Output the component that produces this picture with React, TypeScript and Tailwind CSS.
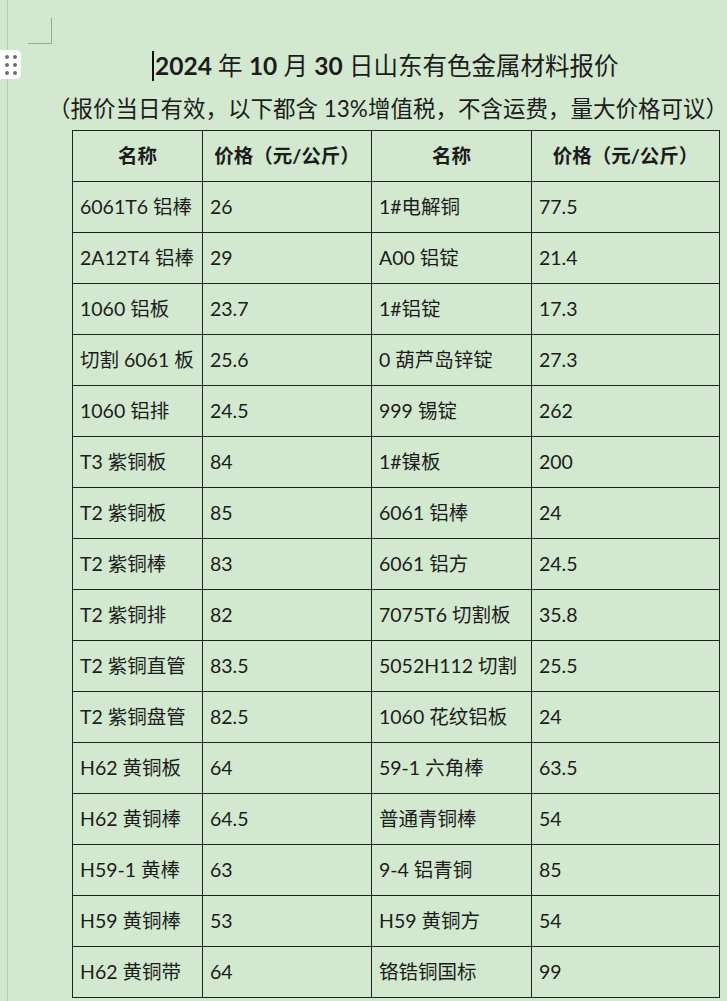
import React from 'react';

type PriceRow = {
  leftName: string;
  leftPrice: string;
  rightName: string;
  rightPrice: string;
};

const rows: PriceRow[] = [
  { leftName: '6061T6 铝棒', leftPrice: '26', rightName: '1#电解铜', rightPrice: '77.5' },
  { leftName: '2A12T4 铝棒', leftPrice: '29', rightName: 'A00 铝锭', rightPrice: '21.4' },
  { leftName: '1060 铝板', leftPrice: '23.7', rightName: '1#铝锭', rightPrice: '17.3' },
  { leftName: '切割 6061 板', leftPrice: '25.6', rightName: '0 葫芦岛锌锭', rightPrice: '27.3' },
  { leftName: '1060 铝排', leftPrice: '24.5', rightName: '999 锡锭', rightPrice: '262' },
  { leftName: 'T3 紫铜板', leftPrice: '84', rightName: '1#镍板', rightPrice: '200' },
  { leftName: 'T2 紫铜板', leftPrice: '85', rightName: '6061 铝棒', rightPrice: '24' },
  { leftName: 'T2 紫铜棒', leftPrice: '83', rightName: '6061 铝方', rightPrice: '24.5' },
  { leftName: 'T2 紫铜排', leftPrice: '82', rightName: '7075T6 切割板', rightPrice: '35.8' },
  { leftName: 'T2 紫铜直管', leftPrice: '83.5', rightName: '5052H112 切割', rightPrice: '25.5' },
  { leftName: 'T2 紫铜盘管', leftPrice: '82.5', rightName: '1060 花纹铝板', rightPrice: '24' },
  { leftName: 'H62 黄铜板', leftPrice: '64', rightName: '59-1 六角棒', rightPrice: '63.5' },
  { leftName: 'H62 黄铜棒', leftPrice: '64.5', rightName: '普通青铜棒', rightPrice: '54' },
  { leftName: 'H59-1 黄棒', leftPrice: '63', rightName: '9-4 铝青铜', rightPrice: '85' },
  { leftName: 'H59 黄铜棒', leftPrice: '53', rightName: 'H59 黄铜方', rightPrice: '54' },
  { leftName: 'H62 黄铜带', leftPrice: '64', rightName: '铬锆铜国标', rightPrice: '99' }
];

const cell = 'h-[51px] border-[1.5px] border-[#1e241e] px-[7px] align-middle whitespace-nowrap';
const head = 'h-[51px] border-[1.5px] border-[#1e241e] px-[7px] align-middle text-center font-bold whitespace-nowrap';

function DragHandle() {
  return (
    <div className="absolute left-0 top-[50px] flex h-[29px] w-[21px] items-center justify-center rounded-r-[5px] bg-white">
      <div className="grid grid-cols-2 gap-x-[4px] gap-y-[4px]">
        {Array.from({ length: 6 }).map((_, i) => (
          <span key={i} className="block h-[4px] w-[4px] rounded-full bg-[#6f6f6f]" />
        ))}
      </div>
    </div>
  );
}

export default function App() {
  return (
    <div
      className="relative h-[1001px] w-[727px] overflow-hidden bg-[#d2e8cf] text-[#1c1c1c]"
      style={{ fontFamily: 'Lato, "Noto Sans CJK SC", sans-serif' }}
    >
      {/* page edge + corner mark */}
      <div className="absolute left-[7px] top-0 h-full w-px bg-[#b7cbb4]" />
      <div className="absolute left-[51px] top-[18px] h-[25px] w-px bg-[#98a797]" />
      <div className="absolute left-[28px] top-[43px] h-px w-[24px] bg-[#98a797]" />
      <DragHandle />

      <div className="flex flex-col">
        <div className="mt-[49px] h-[34px] whitespace-pre pl-[152px] text-[24.5px] leading-[34px]">
          <span className="mr-[1px] inline-block h-[30px] w-[2px] bg-[#111] align-[-6px]" />
          <span className="font-bold">2024</span>
          {' 年 '}
          <span className="font-bold">10</span>
          {' 月 '}
          <span className="font-bold">30</span>
          {' 日山东有色金属材料报价'}
        </div>

        <div className="mt-[11px] whitespace-nowrap pl-[48px] text-[22.5px] leading-[30px]">
          （报价当日有效，以下都含 13%增值税，不含运费，量大价格可议）
        </div>

        <table className="ml-[72px] mt-[6px] w-[647px] table-fixed border-collapse text-[19.5px] leading-[26px]">
          <colgroup>
            <col className="w-[130px]" />
            <col className="w-[169px]" />
            <col className="w-[160px]" />
            <col className="w-[188px]" />
          </colgroup>
          <thead>
            <tr>
              <th className={head}>名称</th>
              <th className={head}>价格（元/公斤）</th>
              <th className={head}>名称</th>
              <th className={head}>价格（元/公斤）</th>
            </tr>
          </thead>
          <tbody>
            {rows.map((row) => (
              <tr key={row.leftName}>
                <td className={cell}>{row.leftName}</td>
                <td className={cell}>{row.leftPrice}</td>
                <td className={cell}>{row.rightName}</td>
                <td className={cell}>{row.rightPrice}</td>
              </tr>
            ))}
          </tbody>
        </table>
      </div>
    </div>
  );
}
